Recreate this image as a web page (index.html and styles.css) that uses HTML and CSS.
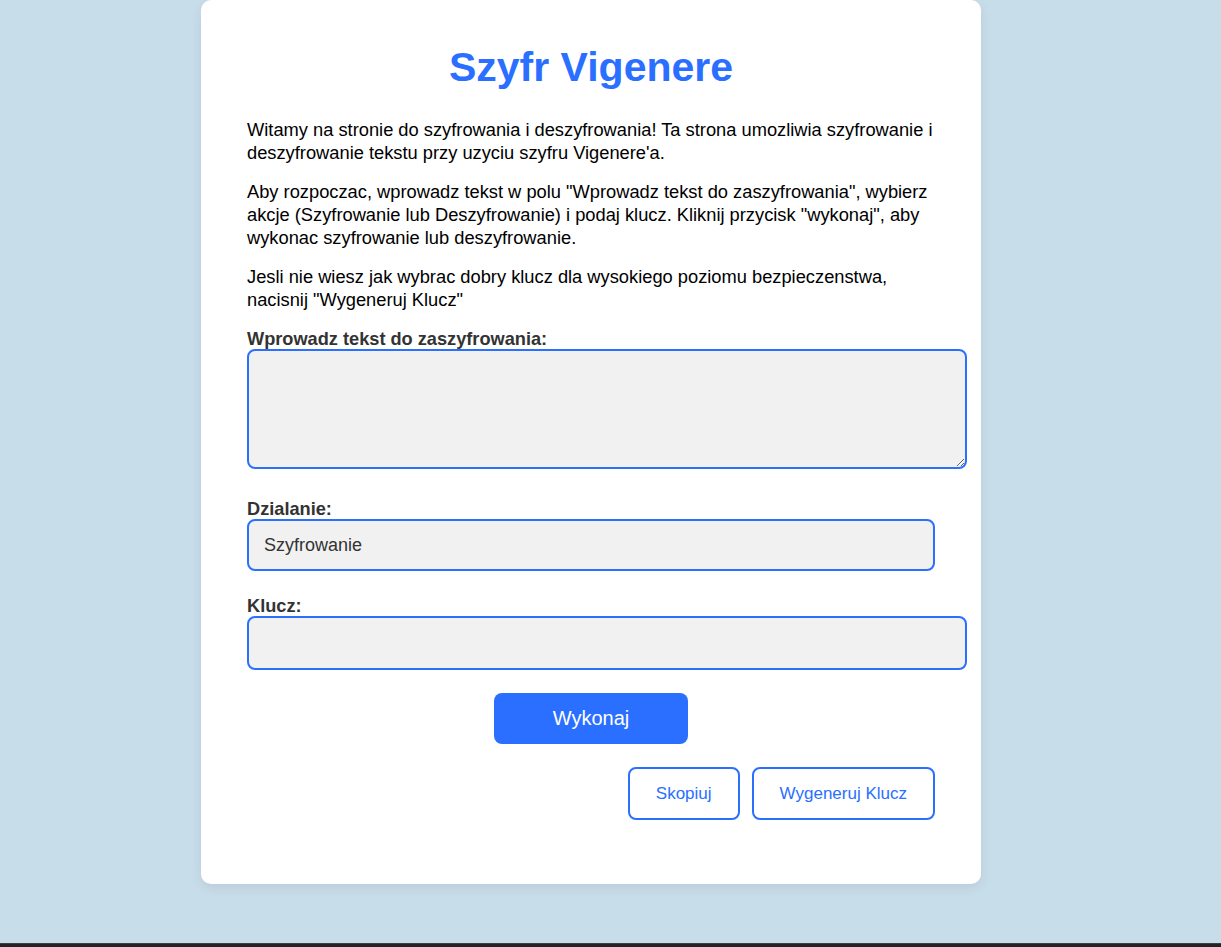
FILE: index.html
```html
<!DOCTYPE html>
<html lang="pl">
<head>
<meta charset="utf-8">
<title>Szyfr Vigenere</title>
<link rel="stylesheet" href="styles.css">
</head>
<body>
<div class="page">
  <div class="card">
    <h1 class="title">Szyfr Vigenere</h1>
    <p class="intro">Witamy na stronie do szyfrowania i deszyfrowania! Ta strona umozliwia szyfrowanie i deszyfrowanie tekstu przy uzyciu szyfru Vigenere'a.</p>
    <p class="intro">Aby rozpoczac, wprowadz tekst w polu "Wprowadz tekst do zaszyfrowania", wybierz akcje (Szyfrowanie lub Deszyfrowanie) i podaj klucz. Kliknij przycisk "wykonaj", aby wykonac szyfrowanie lub deszyfrowanie.</p>
    <p class="intro">Jesli nie wiesz jak wybrac dobry klucz dla wysokiego poziomu bezpieczenstwa, nacisnij "Wygeneruj Klucz"</p>
    <form class="form">
      <label class="label" for="text">Wprowadz tekst do zaszyfrowania:</label>
      <textarea class="field area" id="text"></textarea>
      <label class="label" for="action">Dzialanie:</label>
      <select class="select" id="action">
        <option>Szyfrowanie</option>
        <option>Deszyfrowanie</option>
      </select>
      <label class="label" for="key">Klucz:</label>
      <input class="field input" id="key" type="text">
      <div class="submit-row">
        <button type="button" class="btn-primary">Wykonaj</button>
      </div>
      <div class="actions">
        <button type="button" class="btn-outline">Skopiuj</button>
        <button type="button" class="btn-outline">Wygeneruj Klucz</button>
      </div>
    </form>
  </div>
</div>
<footer class="footer"></footer>
</body>
</html>
```
FILE: styles.css
```css
html, body {
  margin: 0;
  padding: 0;
}
body {
  background: #c8ddea;
  font-family: "Liberation Sans", Arial, sans-serif;
  color: #000;
  overflow: hidden;
}
.page {
  width: 1182px;
  height: 943px;
}
.card {
  width: 688px;
  margin: 0 auto;
  background: #fff;
  border-radius: 10px;
  padding: 1px 46px 64px;
  box-shadow: 0 4px 12px rgba(0, 0, 0, 0.08);
}
.title {
  color: #2a6fff;
  font-size: 41px;
  font-weight: bold;
  text-align: center;
  margin: 43px 0 27px;
}
.intro {
  font-size: 18.3px;
  line-height: 23px;
  margin: 16px 0;
}
.form {
  display: flex;
  flex-direction: column;
  align-items: flex-start;
  margin-top: 18px;
}
.label {
  font-size: 18.2px;
  font-weight: bold;
  color: #333;
  line-height: 20px;
}
.field {
  width: 100%;
  font-family: "Liberation Sans", Arial, sans-serif;
  font-size: 18px;
  background: #f1f1f1;
  border: 2px solid #2a6fff;
  border-radius: 8px;
  padding: 14px;
  outline: none;
  color: #333;
}
.area {
  height: 88px;
  margin: 0 0 30px;
  resize: vertical;
}
.input {
  height: 22px;
  margin: 0 0 23px;
}
.select {
  width: 100%;
  box-sizing: border-box;
  height: 52px;
  margin: 0 0 25px;
  padding: 0 15px;
  font-family: "Liberation Sans", Arial, sans-serif;
  font-size: 18px;
  color: #333;
  background: #f1f1f1;
  border: 2px solid #2a6fff;
  border-radius: 8px;
  appearance: none;
  -webkit-appearance: none;
  outline: none;
}
.submit-row {
  align-self: stretch;
  display: flex;
  justify-content: center;
  margin: 0 0 23px;
}
.btn-primary {
  width: 194px;
  height: 51px;
  background: #2a6fff;
  color: #fff;
  border: none;
  border-radius: 8px;
  font-family: "Liberation Sans", Arial, sans-serif;
  font-size: 20px;
  cursor: pointer;
}
.actions {
  align-self: stretch;
  display: flex;
  justify-content: flex-end;
  gap: 12px;
}
.btn-outline {
  height: 53px;
  padding: 0 26px;
  background: #fff;
  color: #2a6fff;
  border: 2px solid #2a6fff;
  border-radius: 8px;
  font-family: "Liberation Sans", Arial, sans-serif;
  font-size: 17px;
  cursor: pointer;
}
.footer {
  height: 4px;
  background: #232323;
  border-top: 1px solid #3a3f44;
  box-sizing: border-box;
}
```
